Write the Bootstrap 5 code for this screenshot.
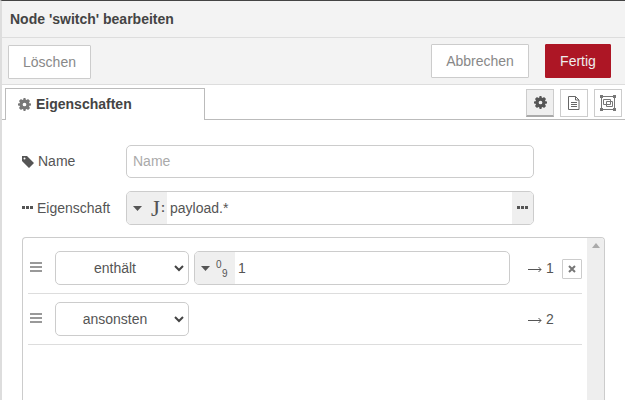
<!DOCTYPE html>
<html lang="de">
<head>
<meta charset="utf-8">
<title>Node switch</title>
<link href="https://cdn.jsdelivr.net/npm/bootstrap@5.3.0/dist/css/bootstrap.min.css" rel="stylesheet">
<style>
html,body{height:400px;overflow:hidden}
body{font-family:"Liberation Sans",Arial,sans-serif;font-size:14px;color:#555;background:#fff;border-top:1px solid #444;border-left:2px solid #ddd;}
.tray-head{height:37px;background:#f3f3f3;border-bottom:1px solid #ddd;padding-left:8px;font-weight:700;color:#444;font-size:14px;line-height:36px}
.tray-bar{height:47px;background:#f3f3f3;border-bottom:1px solid #ddd;padding:6px 14px 0 6px}
.rb{height:34px;border:1px solid #ccc;background:#fff;color:#888;font-size:14px;line-height:32px;padding:0;text-align:center;border-radius:1px;display:block}
.rb-del{width:83px;margin-top:1px}
.rb-cancel{width:98px}
.rb-ok{width:66px;background:#ad1625;border-color:#ad1625;color:#eee}
.tabs{height:35px;border-bottom:1px solid #bbb;padding:3px 3px 0 3px}
.tab-main{width:200px;height:32px;border:1px solid #bbb;border-bottom:0;background:#fff;padding-left:12px;font-weight:700;color:#444;font-size:14px;margin-bottom:-1px;position:relative;gap:5px}
.tab-tools{gap:6px;padding-top:1px}
.tab-ic{width:28px;height:28px;border:1px solid #ccc;background:#fff;padding:0}
.tab-ic.on{background:#efefef;border-bottom:2px solid #aaa}
.frm{padding:25px 20px 0 20px}
.lbl{width:104px;color:#555;font-size:14px}
.fld{width:408px;height:34px;border:1px solid #ccc;border-radius:5px;font-size:14px;color:#555;background:#fff;overflow:hidden}
.fld-name{height:33px;padding:0 6px;line-height:31px;color:#aaa}
.row-two{margin-top:13px}
.tip{background:#efefef;height:100%;width:40px;flex:none}
.tip-end{background:#efefef;height:100%;width:21px;flex:none}
.caret-ic{margin-left:6px;flex:none}
.tval{padding-left:3px;color:#555}
.jmark{font-family:"Liberation Serif",serif;font-size:23px;line-height:1;margin-left:9px;color:#555}
.jcolon{font-weight:700;font-size:12px;color:#555;margin-left:1px}
.rules{width:583px;height:163px;border:1px solid #ccc;border-bottom:0;border-radius:4px 4px 0 0;margin-top:12px;overflow:hidden}
.rules-main{width:564px;flex:none;padding:0 5px}
.rule{height:51px;border-bottom:1px solid #ddd;padding-top:8px}
.rule-first{height:56px;padding-top:13px}
.grip{width:12px;margin-left:2px;margin-right:13px;margin-top:11px;height:10px;flex:none}
.sel{width:134px;height:34px;padding:0 14px 0 0;border:1px solid #ccc;border-radius:5px;font-size:14px;color:#555;text-align:center;line-height:33px;position:relative;background:#fff;flex:none}
.sel svg{position:absolute;right:4px;top:13px}
.tin{width:316px;height:34px;margin-left:5px;border:1px solid #ccc;border-radius:5px;overflow:hidden;color:#555;flex:none}
.out{width:26px;margin-left:18px;color:#555;line-height:34px;flex:none;white-space:nowrap}
.out-two{margin-left:339px}
.out-a{margin-right:4px;vertical-align:0}
.del-x{width:20px;height:20px;border:1px solid #ccc;background:#fff;border-radius:1px;margin:8px 0 0 8px;padding:0;flex:none}
.sb{width:18px;background:#eee;flex:none;height:100%;padding-top:5px}
.num-top,.num-bot{font-size:10px;line-height:1;display:block}
.num-top{margin-top:2px}
.num-bot{margin-left:6px;margin-top:-1px}
.num-wrap{margin-left:6px;width:14px}
</style>
</head>
<body>
<div class="tray-head">Node 'switch' bearbeiten</div>
<div class="tray-bar d-flex justify-content-between align-items-start">
  <button type="button" class="rb rb-del">Löschen</button>
  <div class="d-flex gap-3">
    <button type="button" class="rb rb-cancel">Abbrechen</button>
    <button type="button" class="rb rb-ok">Fertig</button>
  </div>
</div>
<div class="tabs d-flex justify-content-between">
  <div class="tab-main d-flex align-items-center">
    <svg width="13" height="13" viewBox="0 0 14 14"><path fill="#777" fill-rule="evenodd" d="M6 0h2l.3 1.700 1 .4L10.800 1 13 3.200 11.900 4.700l.4 1L14 6v2l-1.700.3-.4 1 1.100 1.500L10.800 13l-1.500-1.100-1 .4L8 14H6l-.3-1.700-1-.4L3.200 13 1 10.800l1.100-1.500-.4-1L0 8V6l1.700-.3.4-1L1 3.200 3.200 1l1.500 1.100 1-.4zM7 5a2 2 0 1 0 0 4 2 2 0 0 0 0-4z"/></svg>
    <span>Eigenschaften</span>
  </div>
  <div class="d-flex tab-tools">
    <button type="button" class="tab-ic on d-flex align-items-center justify-content-center"><svg width="13" height="13" viewBox="0 0 14 14"><path fill="#555" fill-rule="evenodd" d="M6 0h2l.3 1.700 1 .4L10.800 1 13 3.200 11.900 4.700l.4 1L14 6v2l-1.700.3-.4 1 1.100 1.500L10.800 13l-1.500-1.100-1 .4L8 14H6l-.3-1.700-1-.4L3.200 13 1 10.800l1.100-1.500-.4-1L0 8V6l1.700-.3.4-1L1 3.200 3.200 1l1.500 1.100 1-.4zM7 5a2 2 0 1 0 0 4 2 2 0 0 0 0-4z"/></svg></button>
    <button type="button" class="tab-ic d-flex align-items-center justify-content-center"><svg width="14" height="16" viewBox="0 0 14 16" fill="none" stroke="#666"><path d="M1.500 1.500h7l3.500 3.500v9.500H1.500zM8.500 1.500V5H12M4 7.500h6M4 9.500h6M4 11.500h6"/></svg></button>
    <button type="button" class="tab-ic d-flex align-items-center justify-content-center"><svg width="18" height="18" viewBox="0 0 18 18" fill="none" stroke="#777"><path d="M2.500 2.500h13v13h-13zM4.500 5.500h7v5h-7zM7.500 7.500h6v5h-6z"/><path fill="#777" stroke="none" d="M1 1h3v3H1zM14 1h3v3h-3zM1 14h3v3H1zM14 14h3v3h-3z"/></svg></button>
  </div>
</div>
<div class="frm">
  <div class="d-flex align-items-center">
    <div class="lbl d-flex align-items-center gap-1"><svg width="12" height="12" viewBox="0 0 12 12"><path fill="#555" fill-rule="evenodd" d="M0 0h5l7 7-5 5-7-7zM2.500 1.500a1 1 0 1 0 0 2 1 1 0 0 0 0-2z"/></svg><span>Name</span></div>
    <div class="fld fld-name">Name</div>
  </div>
  <div class="d-flex align-items-center row-two">
    <div class="lbl d-flex align-items-center gap-1"><svg width="11" height="4" viewBox="0 0 11 4"><path fill="#555" d="M0 0h3v3H0zM4 0h3v3H4zM8 0h3v3H8z"/></svg><span>Eigenschaft</span></div>
    <div class="fld d-flex align-items-center">
      <div class="tip d-flex align-items-center">
        <svg class="caret-ic" width="9" height="5" viewBox="0 0 9 5"><path fill="#555" d="M0 0h9L4.500 5z"/></svg>
        <span class="jmark">J</span><span class="jcolon">:</span>
      </div>
      <div class="tval flex-grow-1">payload.*</div>
      <div class="tip-end d-flex align-items-center justify-content-center"><svg width="11" height="4" viewBox="0 0 11 4"><path fill="#555" d="M0 0h3v3H0zM4 0h3v3H4zM8 0h3v3H8z"/></svg></div>
    </div>
  </div>
  <div class="rules d-flex">
    <div class="rules-main">
      <div class="rule rule-first d-flex">
        <svg class="grip" viewBox="0 0 12 10"><path fill="#999" d="M0 0h12v2H0zM0 4h12v2H0zM0 8h12v2H0z"/></svg>
        <div class="sel">enthält<svg width="10" height="7" viewBox="0 0 10 7" fill="none" stroke="#444" stroke-width="2"><path d="M1 1l4 4 4-4"/></svg></div>
        <div class="tin d-flex align-items-center">
          <div class="tip d-flex align-items-center">
            <svg class="caret-ic" width="9" height="5" viewBox="0 0 9 5"><path fill="#555" d="M0 0h9L4.500 5z"/></svg>
            <span class="num-wrap"><span class="num-top">0</span><span class="num-bot">9</span></span>
          </div>
          <div class="tval">1</div>
        </div>
        <div class="out"><svg class="out-a" width="14" height="7" viewBox="0 0 14 7" fill="none" stroke="#555"><path d="M0 3.500h13M10.500 1L13 3.500 10.500 6"/></svg>1</div>
        <button type="button" class="del-x d-flex align-items-center justify-content-center"><svg width="8" height="8" viewBox="0 0 8 8" stroke="#777" stroke-width="2"><path d="M1 1l6 6M7 1L1 7"/></svg></button>
      </div>
      <div class="rule d-flex">
        <svg class="grip" viewBox="0 0 12 10"><path fill="#999" d="M0 0h12v2H0zM0 4h12v2H0zM0 8h12v2H0z"/></svg>
        <div class="sel">ansonsten<svg width="10" height="7" viewBox="0 0 10 7" fill="none" stroke="#444" stroke-width="2"><path d="M1 1l4 4 4-4"/></svg></div>
        <div class="out out-two"><svg class="out-a" width="14" height="7" viewBox="0 0 14 7" fill="none" stroke="#555"><path d="M0 3.500h13M10.500 1L13 3.500 10.500 6"/></svg>2</div>
      </div>
    </div>
    <div class="sb d-flex justify-content-center align-items-start"><svg width="8" height="5" viewBox="0 0 8 5"><path fill="#aaa" d="M4 0l4 5H0z"/></svg></div>
  </div>
</div>
</body>
</html>
